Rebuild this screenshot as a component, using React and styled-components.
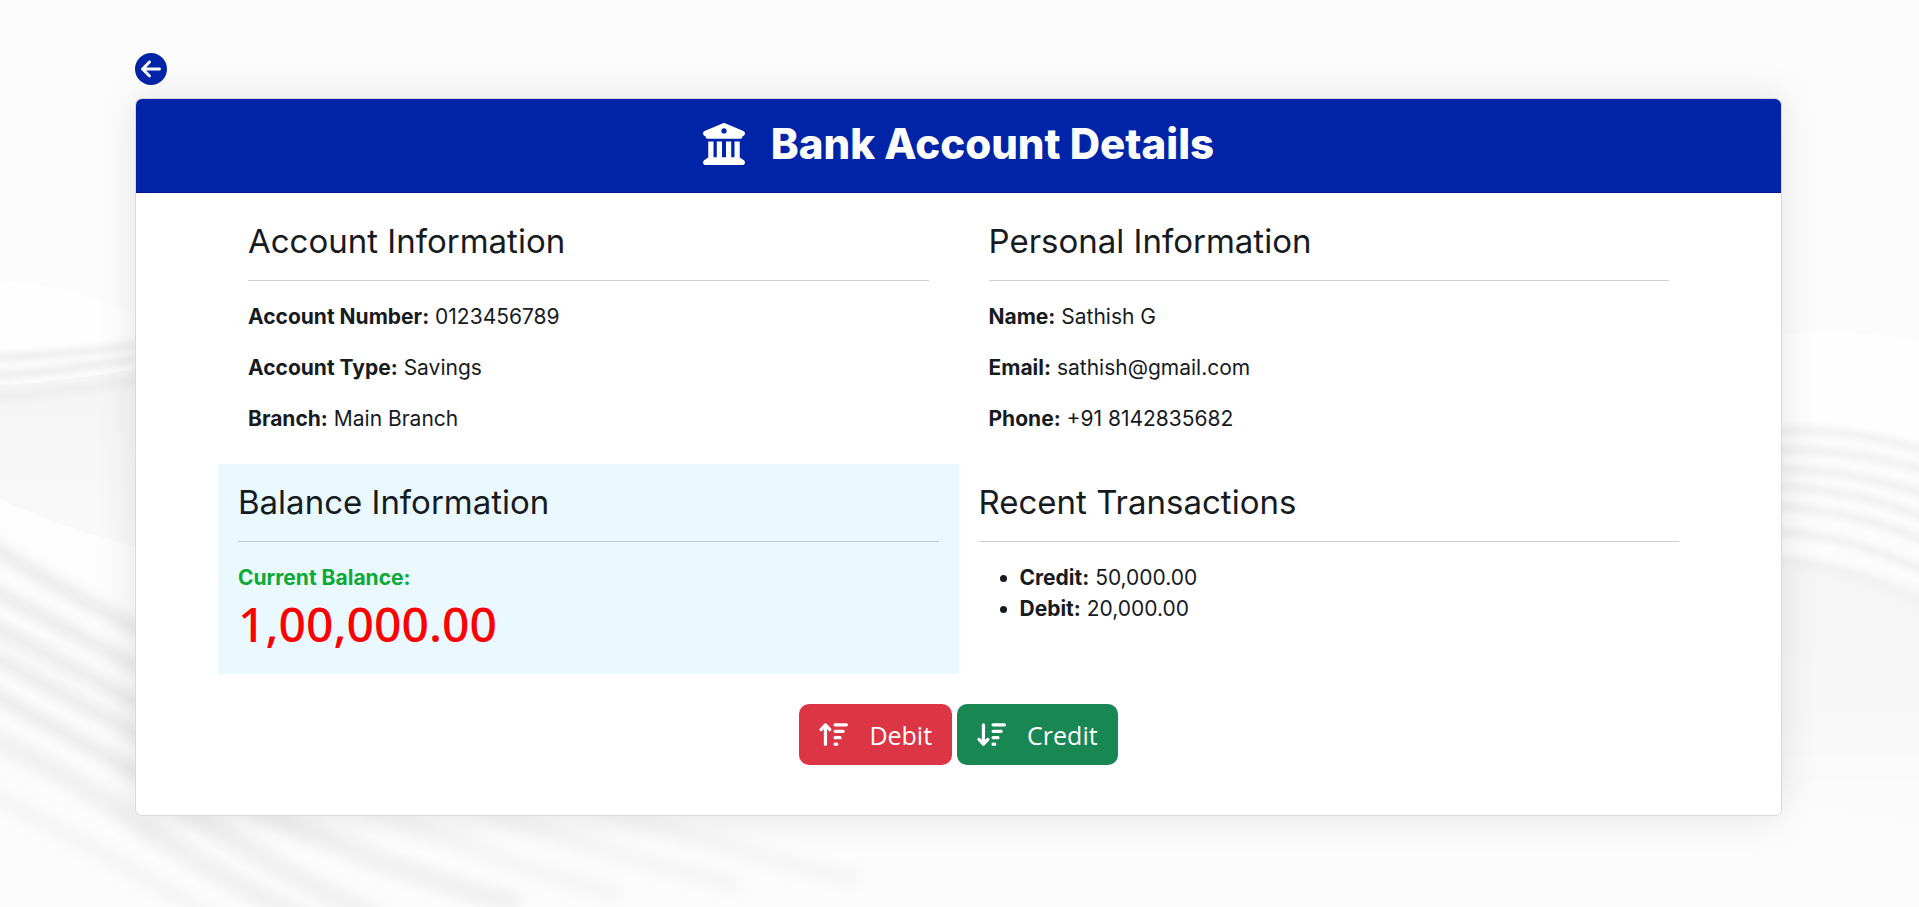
import React from "react";
import styled, { createGlobalStyle } from "styled-components";
import {
  FaCircleArrowLeft,
  FaBuildingColumns,
  FaArrowUpWideShort,
  FaArrowDownWideShort,
} from "react-icons/fa6";

const GlobalStyle = createGlobalStyle`
  *, *::before, *::after { box-sizing: border-box; }
  body {
    margin: 0;
    background: #fcfcfc;
    color: #171b1f;
    font-family: Inter, "Liberation Sans", sans-serif;
    font-size: 21px;
    line-height: 31px;
  }
`;

const Page = styled.main`
  position: relative;
  min-height: 100vh;
  padding: 53px 137px 91px 135px;
`;

const Waves = styled.svg`
  position: absolute;
  inset: 0;
  width: 100%;
  height: 100%;
  z-index: -1;
`;

const BackLink = styled.a`
  display: flex;
  width: 32px;
  height: 32px;
  margin-bottom: 13px;
  color: #0024a8;
  font-size: 32px;
`;

const Card = styled.section`
  border: 1px solid #d9d9d9;
  border-radius: 7px;
  background: #fff;
  box-shadow: 0 0 40px rgba(0, 0, 0, 0.1);
  overflow: hidden;
`;

const CardHeader = styled.header`
  display: flex;
  align-items: center;
  justify-content: center;
  gap: 26px;
  height: 94px;
  padding-bottom: 4px;
  border-bottom: 1px solid #00148f;
  background: #0024a8;
  color: #fff;
  font-size: 42px;
`;

const Title = styled.h1`
  margin: 0;
  font-size: 42px;
  line-height: 50px;
  font-weight: 800;
`;

const Grid = styled.div`
  display: grid;
  grid-template-columns: 1fr 1fr;
  padding: 10px 82px 0;
`;

const Panel = styled.section`
  padding: ${(p) => (p.$inset ? "20px 30px 10px" : "20px")};
  background: ${(p) => (p.$tinted ? "#e9f9ff" : "transparent")};
`;

const PanelTitle = styled.h2`
  margin: 0 0 20px;
  padding-bottom: 20px;
  border-bottom: 1px solid ${(p) => (p.$tinted ? "#bccbd1" : "#cfd0d1")};
  font-size: 33px;
  line-height: 37px;
  font-weight: 400;
`;

const Field = styled.p`
  margin: 0 0 20px;
`;

const Label = styled.strong`
  font-weight: 700;
`;

const BalanceLabel = styled(Label)`
  display: block;
  color: #0ca936;
`;

const Amount = styled.p`
  margin: 0;
  color: #f00;
  font-family: "Noto Sans", "Open Sans", sans-serif;
  font-size: 48px;
  line-height: 61px;
  font-weight: 500;
`;

const TransactionList = styled.ul`
  margin: 0;
  padding-left: 41px;
`;

const Actions = styled.div`
  display: flex;
  justify-content: center;
  gap: 5px;
  padding: 30px 0 50px;
`;

const ActionButton = styled.button`
  display: flex;
  align-items: center;
  gap: 21px;
  height: 61px;
  padding: 0 20px;
  border: 0;
  border-radius: 10px;
  background: ${(p) => (p.$kind === "debit" ? "#dc3545" : "#198754")};
  color: #fff;
  font-family: "Open Sans", "Noto Sans", sans-serif;
  font-size: 25px;
  line-height: 38px;
  cursor: pointer;

  svg {
    width: 29px;
    height: 29px;
  }
`;

const account = [
  ["Account Number:", "0123456789"],
  ["Account Type:", "Savings"],
  ["Branch:", "Main Branch"],
];
const person = [
  ["Name:", "Sathish G"],
  ["Email:", "sathish@gmail.com"],
  ["Phone:", "+91 8142835682"],
];
const transactions = [
  ["Credit:", "50,000.00"],
  ["Debit:", "20,000.00"],
];

function Fields({ rows }) {
  return rows.map(([label, value]) => (
    <Field key={label}>
      <Label>{label}</Label> {value}
    </Field>
  ));
}

const leftRibbons = [
  "M-30 534 Q60 590 200 662",
  "M-30 578 Q60 626 200 700",
  "M-30 614 Q60 660 200 738",
  "M-30 644 Q60 692 200 768",
  "M-30 682 Q60 730 200 808",
];
const lowerRibbons = [
  "M-30 728 Q60 768 140 824 T330 930",
  "M160 790 Q250 858 390 925",
  "M215 785 Q320 850 520 905",
];
const faintRibbons = [
  "M-30 786 Q90 840 230 930",
  "M340 790 Q450 850 620 895",
  "M440 790 Q560 845 740 885",
  "M560 790 Q680 840 860 880",
];
const rightRibbons = [
  "M1760 432 Q1850 424 1940 456",
  "M1760 450 Q1850 446 1940 475",
  "M1760 470 Q1850 466 1940 500",
  "M1760 486 Q1850 486 1940 523",
  "M1760 506 Q1850 506 1940 548",
  "M1760 532 Q1850 530 1940 580",
  "M1760 560 Q1850 560 1940 614",
];

function Ribbons({ paths, color, width, filter }) {
  return (
    <g fill="none" stroke={color} strokeWidth={width} filter={filter}>
      {paths.map((d) => (
        <path key={d} d={d} />
      ))}
    </g>
  );
}

function Background() {
  return (
    <Waves viewBox="0 0 1919 907" preserveAspectRatio="none" aria-hidden="true">
      <defs>
        <filter id="soft" x="-10%" y="-10%" width="120%" height="120%">
          <feGaussianBlur stdDeviation="6" />
        </filter>
        <filter id="fine" x="-10%" y="-50%" width="120%" height="200%">
          <feGaussianBlur stdDeviation="3" />
        </filter>
        <linearGradient id="shade" x1="0" y1="0" x2="0" y2="1">
          <stop offset="0" stopColor="#f4f4f4" />
          <stop offset="1" stopColor="#fafafa" />
        </linearGradient>
        <linearGradient id="slope" x1="0" y1="0" x2="0" y2="1">
          <stop offset="0" stopColor="#f5f5f5" />
          <stop offset="0.6" stopColor="#f8f8f8" />
          <stop offset="1" stopColor="#fcfcfc" />
        </linearGradient>
      </defs>
      <path d="M0 281 Q70 282 160 325 V360 H0Z" fill="#fefefe" />
      <path d="M0 385 Q90 380 180 360 V570 L0 500Z" fill="url(#shade)" />
      <Ribbons
        paths={["M-20 358 Q80 356 180 338", "M-20 377 Q80 371 180 350", "M-20 398 Q80 392 180 372"]}
        color="#ededed"
        width="8"
        filter="url(#fine)"
      />
      <path d="M0 499 Q70 533 160 552 V680 L0 620Z" fill="#fdfdfd" />
      <Ribbons paths={leftRibbons} color="#ececec" width="16" filter="url(#soft)" />
      <Ribbons paths={lowerRibbons} color="#f1f1f1" width="22" filter="url(#soft)" />
      <Ribbons paths={faintRibbons} color="#f6f6f6" width="20" filter="url(#soft)" />
      <path d="M1770 336 Q1850 326 1919 342 V450 L1770 430Z" fill="#fefefe" />
      <path
        d="M1760 560 Q1860 560 1940 600 V830 L1760 790Z"
        fill="url(#slope)"
        filter="url(#soft)"
      />
      <Ribbons paths={rightRibbons} color="#f1f1f1" width="9" filter="url(#fine)" />
    </Waves>
  );
}

export default function App() {
  return (
    <Page>
      <GlobalStyle />
      <Background />
      <BackLink href="#" aria-label="Back">
        <FaCircleArrowLeft />
      </BackLink>
      <Card>
        <CardHeader>
          <FaBuildingColumns />
          <Title>Bank Account Details</Title>
        </CardHeader>
        <Grid>
          <Panel $inset>
            <PanelTitle>Account Information</PanelTitle>
            <Fields rows={account} />
          </Panel>
          <Panel $inset>
            <PanelTitle>Personal Information</PanelTitle>
            <Fields rows={person} />
          </Panel>
          <Panel $tinted>
            <PanelTitle $tinted>Balance Information</PanelTitle>
            <BalanceLabel>Current Balance:</BalanceLabel>
            <Amount>1,00,000.00</Amount>
          </Panel>
          <Panel>
            <PanelTitle>Recent Transactions</PanelTitle>
            <TransactionList>
              {transactions.map(([label, value]) => (
                <li key={label}>
                  <Label>{label}</Label> {value}
                </li>
              ))}
            </TransactionList>
          </Panel>
        </Grid>
        <Actions>
          <ActionButton type="button" $kind="debit">
            <FaArrowUpWideShort />
            Debit
          </ActionButton>
          <ActionButton type="button" $kind="credit">
            <FaArrowDownWideShort />
            Credit
          </ActionButton>
        </Actions>
      </Card>
    </Page>
  );
}
